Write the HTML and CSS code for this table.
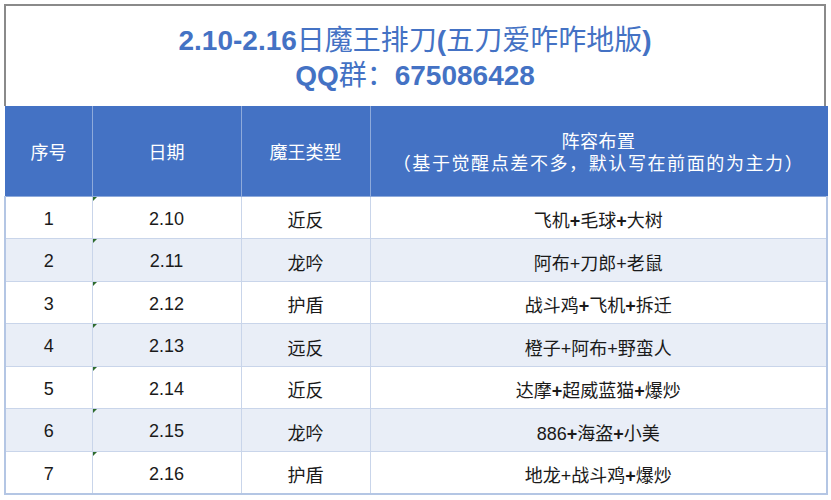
FILE: index.html
```html
<!DOCTYPE html>
<html lang="zh-CN">
<head>
<meta charset="utf-8">
<link rel="stylesheet" href="styles.css">
</head>
<body>
<div class="sheet">
  <div class="title">
    <div class="title-line"><span class="num">2.10-2.16</span>日魔王排刀<span class="num">(</span>五刀爱咋咋地版<span class="num">)</span></div>
    <div class="title-line"><span class="num">QQ</span>群：<span class="num">675086428</span></div>
  </div>
  <table class="grid">
    <colgroup>
      <col class="c1"><col class="c2"><col class="c3"><col class="c4">
    </colgroup>
    <thead>
      <tr class="head">
        <th>序号</th>
        <th>日期</th>
        <th>魔王类型</th>
        <th><div class="hl">阵容布置</div><div class="hl wide">（基于觉醒点差不多，默认写在前面的为主力）</div></th>
      </tr>
    </thead>
    <tbody>
      <tr class="r a"><td>1</td><td class="date">2.10</td><td>近反</td><td>飞机<b>+</b>毛球<b>+</b>大树</td></tr>
      <tr class="r b"><td>2</td><td class="date">2.11</td><td>龙吟</td><td>阿布+刀郎+老鼠</td></tr>
      <tr class="r a"><td>3</td><td class="date">2.12</td><td>护盾</td><td>战斗鸡<b>+</b>飞机<b>+</b>拆迁</td></tr>
      <tr class="r b"><td>4</td><td class="date">2.13</td><td>远反</td><td>橙子+阿布+野蛮人</td></tr>
      <tr class="r a"><td>5</td><td class="date">2.14</td><td>近反</td><td>达摩<b>+</b>超威蓝猫<b>+</b>爆炒</td></tr>
      <tr class="r b"><td>6</td><td class="date">2.15</td><td>龙吟</td><td>886<b>+</b>海盗<b>+</b>小美</td></tr>
      <tr class="r a"><td>7</td><td class="date">2.16</td><td>护盾</td><td>地龙+战斗鸡<b>+</b>爆炒</td></tr>
    </tbody>
  </table>
</div>
</body>
</html>
```

FILE: styles.css
```css
html, body {
  margin: 0;
  padding: 0;
  background: #ffffff;
}
body {
  font-family: "Liberation Sans", "Noto Sans CJK SC", sans-serif;
  color: #1a1a1a;
}
.sheet {
  margin: 4px 0 0 4px;
  width: 822px;
}
.title {
  box-sizing: border-box;
  height: 102px;
  border: 2px solid #8a8a8a;
  border-bottom: none;
  display: flex;
  flex-direction: column;
  align-items: center;
  justify-content: center;
  color: #4472c4;
  font-size: 28px;
  line-height: 33px;
  padding-top: 1px;
}
.title-line {
  font-family: "Noto Sans CJK SC", sans-serif;
  font-weight: 400;
  white-space: nowrap;
}
.title-line .num {
  font-family: "Liberation Sans", sans-serif;
  font-weight: 700;
}
.grid {
  width: 822px;
  border-collapse: collapse;
  table-layout: fixed;
}
.c1 { width: 87px; }
.c2 { width: 149px; }
.c3 { width: 129px; }
.c4 { width: 457px; }
.head th {
  height: 90px;
  padding: 0;
  background: #4472c4;
  color: #ffffff;
  font-family: "Noto Sans CJK SC", sans-serif;
  font-weight: 400;
  font-size: 18px;
  line-height: 22px;
  border-left: 1px solid #8eaadb;
  border-right: 1px solid #8eaadb;
  border-bottom: 1px solid #8eaadb;
}
.hl {
  height: 22px;
  letter-spacing: 0.5px;
  white-space: nowrap;
}
.hl.wide {
  letter-spacing: 1.6px;
}
.head th:first-child { border-left: 1px solid #4472c4; }
.head th:last-child { border-right: 1px solid #4472c4; }
.r td {
  padding: 3px 0 0;
  text-align: center;
  font-size: 18px;
  border: 1px solid #c9d5ea;
  white-space: nowrap;
  font-weight: 400;
}
.r td b { font-weight: 700; }
.r.a td { height: 38px; background: #ffffff; }
.r.b td { height: 39px; background: #e9eef7; }
.r td:first-child { border-left: 2px solid #b4c6e4; }
.r td:last-child { border-right: 2px solid #b4c6e4; }
.r:last-child td { border-bottom: 2px solid #b4c6e4; }
.date { position: relative; }
.date::before {
  content: "";
  position: absolute;
  left: 0;
  top: 0;
  width: 0;
  height: 0;
  border-top: 4px solid #2e6b2e;
  border-right: 4px solid transparent;
}
```
